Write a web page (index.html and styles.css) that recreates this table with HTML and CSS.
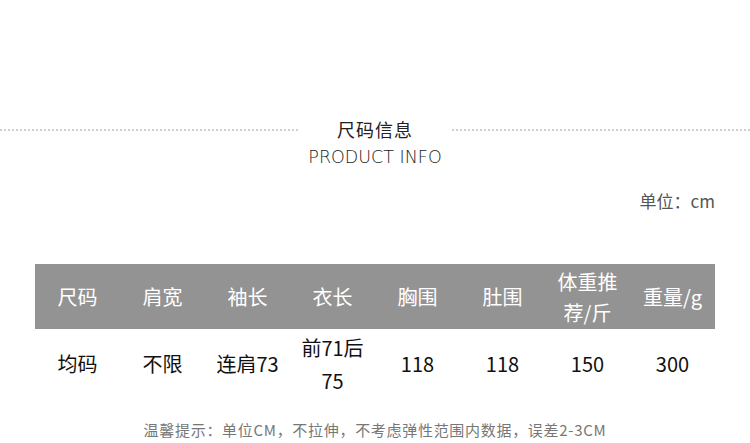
FILE: index.html
```html
<!DOCTYPE html>
<html lang="zh">
<head>
<meta charset="utf-8">
<link rel="stylesheet" href="styles.css">
</head>
<body>
<div class="page">
  <div class="title-row">
    <div class="dots"></div>
    <div class="title-text">
      <div class="cn">尺码信息</div>
      <div class="en">PRODUCT INFO</div>
    </div>
    <div class="dots"></div>
  </div>
  <div class="unit">单位：cm</div>
  <div class="table">
    <div class="row head">
      <div class="cell">尺码</div>
      <div class="cell">肩宽</div>
      <div class="cell">袖长</div>
      <div class="cell">衣长</div>
      <div class="cell">胸围</div>
      <div class="cell">肚围</div>
      <div class="cell narrow">体重推荐/斤</div>
      <div class="cell">重量/g</div>
    </div>
    <div class="row body">
      <div class="cell">均码</div>
      <div class="cell">不限</div>
      <div class="cell">连肩73</div>
      <div class="cell narrow2">前71后75</div>
      <div class="cell">118</div>
      <div class="cell">118</div>
      <div class="cell">150</div>
      <div class="cell">300</div>
    </div>
  </div>
  <div class="note">温馨提示：单位CM，不拉伸，不考虑弹性范围内数据，误差2-3CM</div>
</div>
</body>
</html>
```
FILE: styles.css
```css
html, body {
  margin: 0;
  padding: 0;
  background: #ffffff;
}
body {
  width: 750px;
  height: 443px;
  overflow: hidden;
  font-family: "Noto Sans CJK SC", "Noto Sans", sans-serif;
}
.page {
  padding-top: 115px;
}
.title-row {
  display: flex;
  align-items: flex-start;
}
.dots {
  flex: 1;
  margin-top: 14px;
  border-top: 2px dotted #cfcfcf;
}
.title-text {
  width: 154px;
  text-align: center;
}
.cn {
  font-size: 18px;
  line-height: 28px;
  color: #222;
  letter-spacing: 1px;
}
.en {
  font-family: "DejaVu Sans", sans-serif;
  font-weight: 200;
  font-size: 17.5px;
  line-height: 28px;
  color: #222;
  white-space: nowrap;
  margin: 0 -20px;
}
.unit {
  margin-top: 18px;
  padding-right: 35px;
  text-align: right;
  font-size: 17px;
  line-height: 24px;
  color: #555;
}
.table {
  margin: 51px 35px 0;
}
.row {
  display: grid;
  grid-template-columns: repeat(8, 1fr);
}
.head {
  background: #939393;
  color: #fff;
  height: 65px;
}
.body {
  color: #111;
  height: 70px;
}
.cell {
  display: flex;
  align-items: center;
  justify-content: center;
  text-align: center;
  font-size: 20px;
  line-height: 32px;
  padding: 0 2px;
}
.head .narrow {
  padding: 0 10px;
  line-height: 31px;
}
.body .narrow2 {
  padding: 0 8px;
  line-height: 33px;
}
.note {
  margin-top: 21px;
  text-align: center;
  font-size: 15px;
  line-height: 20px;
  letter-spacing: 0.7px;
  color: #777;
  white-space: nowrap;
}
```
